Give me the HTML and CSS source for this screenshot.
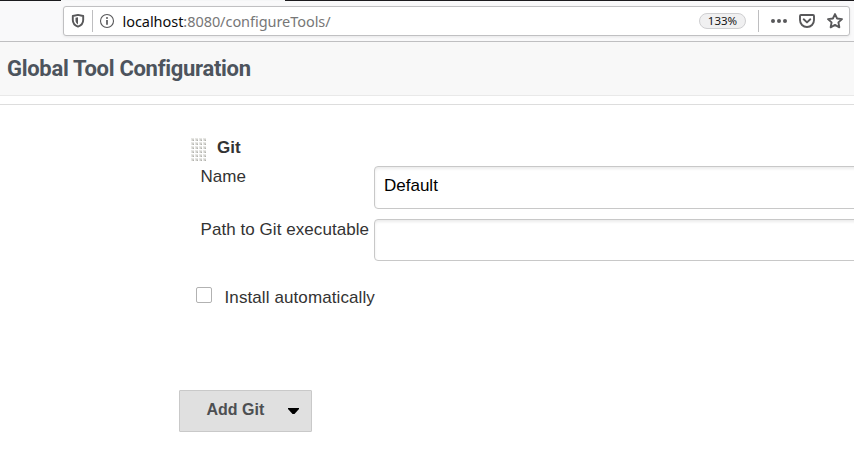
FILE: index.html
```html
<!DOCTYPE html>
<html lang="en">
<head>
<meta charset="utf-8">
<title>Global Tool Configuration</title>
<link rel="stylesheet" href="styles.css">
</head>
<body>
<header class="browser">
  <div class="tabs"><span class="tab"></span></div>
  <div class="urlbar">
    <svg class="shield" width="14" height="16" viewBox="0 0 14 16"><path d="M7 1.900 12.200 3v4c0 3.400-2.200 5.500-5.200 6.600C4 12.500 1.800 10.400 1.800 7V3z" fill="none" stroke="#58585a" stroke-width="1.900" stroke-linejoin="round"/><path d="M7 4.200v7.200C5.200 10.400 4.500 9 4.500 7V4.800z" fill="#58585a"/></svg>
    <span class="divider"></span>
    <svg class="info" width="16" height="16" viewBox="0 0 16 16"><circle cx="8" cy="8" r="6.500" fill="none" stroke="#58585a" stroke-width="1.100"/><circle cx="8" cy="4.900" r="1" fill="#58585a"/><path d="M8 7v4.800" stroke="#58585a" stroke-width="1.700"/></svg>
    <span class="url"><span class="host">localhost</span><span class="path">:8080/configureTools/</span></span>
    <span class="zoom">133%</span>
    <span class="divider"></span>
    <svg class="dots" width="18" height="16" viewBox="0 0 18 16" fill="#58585a"><circle cx="3" cy="8" r="2"/><circle cx="9" cy="8" r="2"/><circle cx="15" cy="8" r="2"/></svg>
    <svg class="pocket" width="18" height="16" viewBox="0 0 18 16" fill="none" stroke="#58585a" stroke-width="1.900" stroke-linecap="round" stroke-linejoin="round"><path d="M3 2h12q1 0 1 1v4c0 4-3 7-7 7S2 11 2 7V3q0-1 1-1z"/><path d="M5.700 6.300 9 9.400l3.300-3.100"/></svg>
    <svg class="star" width="18" height="18" viewBox="0 0 18 18"><path d="m9 2.100 2.100 4.400 4.900.6-3.600 3.300.95 4.900L9 12.900l-4.350 2.400.95-4.900L2 7.100l4.900-.6z" fill="none" stroke="#58585a" stroke-width="1.900" stroke-linejoin="round"/></svg>
  </div>
</header>
<div class="heading"><h1><span>Global Tool Configuration</span></h1></div>
<main class="config">
  <div class="section">
    <svg class="grip" width="16" height="24" viewBox="0 0 16 24"><defs><pattern id="dot" width="4" height="4" patternUnits="userSpaceOnUse"><rect width="3" height="3" fill="#e6e6e3"/><rect x="1" y="1" width="2" height="2" fill="#d0d0cc"/><rect x="2" y="2" width="1" height="1" fill="#b2b2ad"/></pattern></defs><rect width="16" height="24" fill="url(#dot)"/></svg>
    <h2><span>Git</span></h2>
  </div>
  <div class="row"><label for="name"><span>Name</span></label><input id="name" type="text" value="Default"></div>
  <div class="row"><label for="home"><span>Path to Git executable</span></label><input id="home" class="short" type="text"></div>
  <label class="check"><input type="checkbox"><span>Install automatically</span></label>
  <button class="add" type="button"><span>Add Git</span><svg width="11" height="7" viewBox="0 0 11 7"><path d="M0 0h11v1L6.500 6h-2L0 1z"/></svg></button>
</main>
</body>
</html>
```
FILE: styles.css
```css
* { box-sizing: border-box; }
body { margin: 0; background: #fff; color: #333; font: 17px/20px "Liberation Sans", Arial, sans-serif; overflow: hidden; }
.browser { height: 42px; background: #f9f9fa; border-bottom: 1px solid #bfbfc1; }
.tabs { height: 1px; background: #1c1b1e; padding-left: 61px; }
.tab { display: block; width: 224px; height: 1px; background: #f5f6f7; }
.urlbar { display: flex; align-items: center; width: 787px; height: 30px; margin: 5px 0 0 63px; padding-left: 7px; background: #fff; border: 1px solid #c0c0c2; border-radius: 3px; box-shadow: 0 1px 3px rgba(0,0,0,.08); }
.urlbar svg { flex: none; }
.divider { width: 1px; height: 22px; background: #bebec0; margin: 0 6px 0 7px; }
.url { flex: 1; margin-left: 7.500px; font: 14.5px/20px "Noto Sans", sans-serif; letter-spacing: -.05px; white-space: nowrap; }
.host { color: #0c0c0d; }
.path { color: #777; }
.zoom { width: 47px; height: 16px; border: 1px solid #cfcfd1; border-radius: 8px; background: #f0f0f1; color: #151515; font: 11.5px/14px "Noto Sans", sans-serif; text-align: center; margin-right: 5px; }
.dots { margin-left: 5px; }
.pocket { margin-left: 10px; }
.star { margin: 0 5px 0 10px; }
.heading { height: 54px; margin-bottom: 8px; background: #f8f8f8; border-bottom: 1px solid #e9e9e9; padding: 0 0 0 7px; }
h1 { margin: 0; padding-top: 9px; color: #4d545d; font: 700 22px/36px Roboto, sans-serif; letter-spacing: -.3px; }
.config { border-top: 1px solid #ddd; padding-left: 179px; }
.section { display: flex; align-items: flex-start; padding: 33px 0 0 12px; height: 61px; }
h2 { margin: 0 0 0 10px; font-size: 17px; line-height: 20px; }
.row { display: grid; grid-template-columns: 173.5px 1fr; height: 53px; padding-left: 21.500px; }
.row label { padding-top: 1px; letter-spacing: .06px; }
.row input { height: 43px; width: 520px; border: 1px solid #c8c8c8; border-radius: 4px; box-shadow: inset 0 2px 3px rgba(0,0,0,.08); padding: 0 9px 4px; font: inherit; color: #000; background: #fff; }
.row .short { height: 42px; }
.check { display: flex; align-items: flex-start; height: 20px; margin: 16px 0 0 17px; letter-spacing: .1px; }
.check input { appearance: none; width: 16px; height: 16px; margin: -1px 12.500px 0 0; border: 1px solid #b2b2b2; border-radius: 2px; background: #fff; }
.add { display: flex; align-items: center; justify-content: space-between; width: 133px; height: 42px; margin-top: 82px; padding: 0 12px 3px 26.500px; background: #e0e0e0; border: 1px solid #c9c9c9; border-radius: 1px; color: #4d4f52; font: 700 16px/20px "Liberation Sans", Arial, sans-serif; }
.add svg { margin-top: 4px; fill: #000; }
```
